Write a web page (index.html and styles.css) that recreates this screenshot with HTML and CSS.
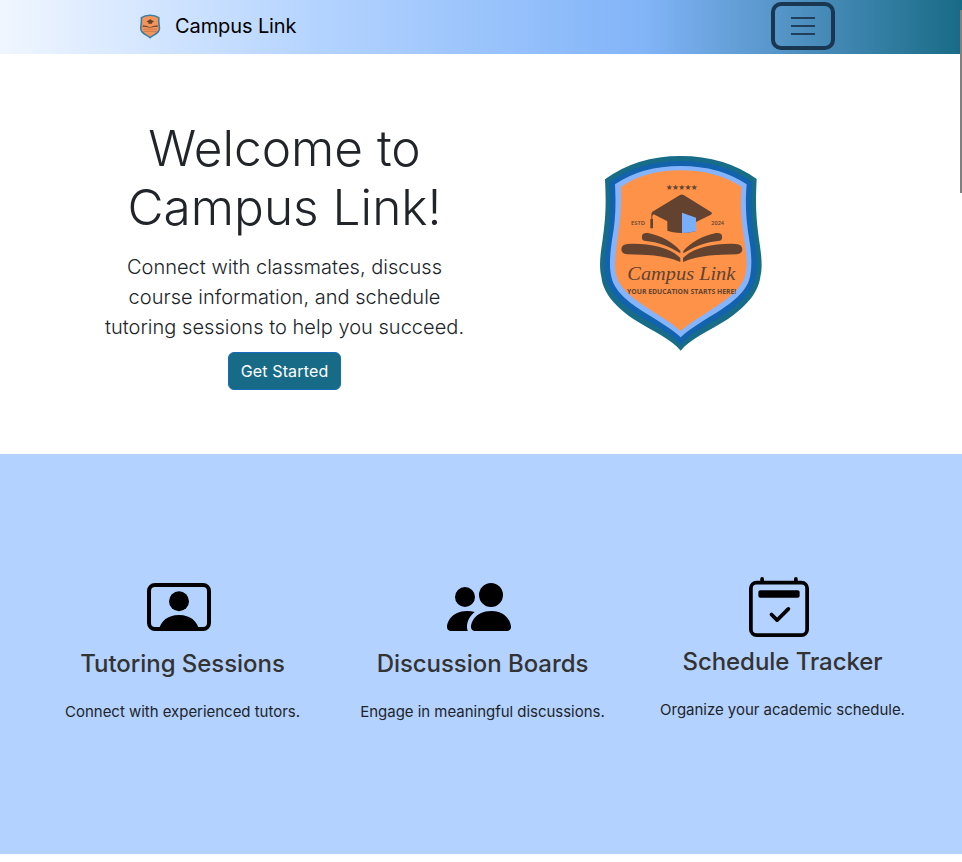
FILE: index.html
```html
<!DOCTYPE html>
<html lang="en">
<head>
<meta charset="utf-8">
<title>Campus Link</title>
<link rel="stylesheet" href="styles.css">
</head>
<body>
<nav class="navbar">
  <a class="brand">
    <svg class="brand-logo" viewBox="0 0 540 645">
      <path fill="#3d7da0" d="M45 103Q140 33 272 33T500 102C496 180 498 220 508 290C516 340 517 370 511 395C504 450 459 490 414 522C354 560 299 583 272 617C245 583 190 560 130 522C85 490 40 450 34 395C28 370 29 340 37 290C47 220 49 180 45 103Z"/>
      <path fill="#f4935a" d="M84 122Q160 70 272 70T462 122C456 180 458 225 470 285C478 335 476 365 474 388C467 430 426 462 388 488C340 518 300 540 272 567C244 540 204 518 156 488C118 462 77 430 70 388C67 365 68 335 75 285C85 225 87 180 84 122Z"/>
      <g fill="#634330">
        <path d="M186 201L275 147L366 203L318 231V258H232V229Z"/>
        <path d="M94 297Q190 290 275 339Q360 290 457 297V328Q350 330 275 351Q190 330 94 328Z"/>
      </g>
      <path stroke="#634330" stroke-width="14" opacity=".45" d="M115 385H435M115 440H435"/>
    </svg>
    <span>Campus Link</span>
  </a>
  <button class="toggler" aria-label="Menu">
    <svg viewBox="0 0 30 30" width="30" height="30"><path stroke="#213f5b" stroke-width="2" d="M3 7h24M3 15h24M3 23h24"/></svg>
  </button>
</nav>
<div class="scroll-thumb"></div>

<header class="hero">
  <div class="hero-copy">
    <h1>Welcome to<br>Campus Link!</h1>
    <p>Connect with classmates, discuss<br>course information, and schedule<br>tutoring sessions to help you succeed.</p>
    <a class="button">Get Started</a>
  </div>
  <svg class="hero-logo" viewBox="0 0 540 645">
    <path fill="#176c88" d="M45 103Q140 33 272 33T500 102C496 180 498 220 508 290C516 340 517 370 511 395C504 450 459 490 414 522C354 560 299 583 272 617C245 583 190 560 130 522C85 490 40 450 34 395C28 370 29 340 37 290C47 220 49 180 45 103Z"/>
    <path fill="#1262ae" d="M59 111Q145 48 272 48T486 111C481 180 484 220 494 290C502 340 503 370 497 392C490 442 446 479 404 507C346 544 299 567 272 599C245 567 198 544 140 507C98 479 54 442 47 392C42 370 43 340 51 290C61 220 62 180 59 111Z"/>
    <path fill="#85b4fc" d="M75 118Q155 63 272 63T470 118C465 180 468 225 478 285C486 335 485 365 481 390C474 436 432 468 392 495C344 526 299 550 272 577C245 550 200 526 152 495C112 468 70 436 63 390C58 365 59 335 66 285C77 225 78 180 75 118Z"/>
    <path fill="#fe9248" d="M93 126Q165 76 272 76T455 126C450 180 453 225 463 285C471 335 471 365 467 385C460 425 420 457 382 482C337 512 299 533 272 558C245 533 207 512 162 482C124 457 84 425 77 385C73 365 75 335 82 285C91 225 95 180 93 126Z"/>
    <g fill="#634330">
      <text class="crest-stars" x="227" y="134" textLength="96">★★★★★</text>
      <path d="M186 201L270 150Q275 147 281 150L362 200Q370 205 361 210L318 231V258Q300 264 275 264Q245 262 232 257V229L191 208L187 212V222H189V250H181V222H184V208Z"/>
      <path d="M156 272Q158 262 174 264C214 272 250 292 271 318V325C240 305 205 291 163 287Q154 285 156 272Z"/>
      <path d="M396 272Q394 262 378 264C338 272 302 292 280 318V325C312 305 347 291 389 287Q398 285 396 272Z"/>
      <path d="M94 313Q95 298 113 297C177 294 240 307 271 339V351C220 329 165 330 111 328Q94 327 94 313Z"/>
      <path d="M457 313Q456 298 438 297C374 294 311 307 279 339V351C330 329 385 330 440 328Q457 327 457 313Z"/>
    </g>
    <path fill="#79aefa" d="M276 203L318 218V258Q300 264 276 264Z"/>
    <g fill="#634330">
      <text class="crest-small" x="123" y="241" textLength="42" lengthAdjust="spacingAndGlyphs">ESTD</text>
      <text class="crest-small" x="364" y="241" textLength="38" lengthAdjust="spacingAndGlyphs">2024</text>
      <text class="crest-name" x="112" y="404" textLength="324" lengthAdjust="spacingAndGlyphs">Campus Link</text>
      <text class="crest-motto" x="111" y="447" textLength="328" lengthAdjust="spacingAndGlyphs">YOUR EDUCATION STARTS HERE!</text>
    </g>
  </svg>
</header>

<main class="features">
  <section class="feature">
    <svg class="icon" viewBox="0 0 16 16"><path d="M8 9.05a2.5 2.5 0 1 0 0-5 2.5 2.5 0 0 0 0 5"/><path d="M2 2a2 2 0 0 0-2 2v8a2 2 0 0 0 2 2h12a2 2 0 0 0 2-2V4a2 2 0 0 0-2-2zm10.798 11c-.453-1.27-1.76-3-4.798-3-3.037 0-4.345 1.73-4.798 3H2a1 1 0 0 1-1-1V4a1 1 0 0 1 1-1h12a1 1 0 0 1 1 1v8a1 1 0 0 1-1 1z"/></svg>
    <h2>Tutoring Sessions</h2>
    <p>Connect with experienced tutors.</p>
  </section>
  <section class="feature">
    <svg class="icon" viewBox="0 0 16 16"><path d="M7 14s-1 0-1-1 1-4 5-4 5 3 5 4-1 1-1 1zm4-6a3 3 0 1 0 0-6 3 3 0 0 0 0 6m-5.784 6A2.24 2.24 0 0 1 5 13c0-1.355.68-2.75 1.936-3.72A6.3 6.3 0 0 0 5 9c-4 0-5 3-5 4s1 1 1 1zM4.5 8a2.5 2.5 0 1 0 0-5 2.5 2.5 0 0 0 0 5"/></svg>
    <h2>Discussion Boards</h2>
    <p>Engage in meaningful discussions.</p>
  </section>
  <section class="feature feature-schedule">
    <svg class="icon" viewBox="0 0 16 16"><path d="M10.854 8.146a.5.5 0 0 1 0 .708l-3 3a.5.5 0 0 1-.708 0l-1.5-1.5a.5.5 0 1 1 .708-.708L7.5 10.793l2.646-2.647a.5.5 0 0 1 .708 0"/><path d="M3.5 0a.5.5 0 0 1 .5.5V1h8V.5a.5.5 0 0 1 1 0V1h1a2 2 0 0 1 2 2v11a2 2 0 0 1-2 2H2a2 2 0 0 1-2-2V3a2 2 0 0 1 2-2h1V.5a.5.5 0 0 1 .5-.5M2 2a1 1 0 0 0-1 1v11a1 1 0 0 0 1 1h12a1 1 0 0 0 1-1V3a1 1 0 0 0-1-1z"/><path d="M2.5 4a.5.5 0 0 1 .5-.5h10a.5.5 0 0 1 .5.5v1a.5.5 0 0 1-.5.5H3a.5.5 0 0 1-.5-.5z"/></svg>
    <h2>Schedule Tracker</h2>
    <p>Organize your academic schedule.</p>
  </section>
</main>
</body>
</html>
```
FILE: styles.css
```css
* { box-sizing: border-box; }
body {
  margin: 0;
  height: 862px;
  overflow: hidden;
  background: #fff;
  color: #212529;
  font-family: Inter, "Liberation Sans", sans-serif;
}
h1, h2, p { margin: 0; white-space: nowrap; }
.navbar {
  display: flex;
  align-items: center;
  justify-content: space-between;
  height: 54px;
  padding: 0 127px 2px 138px;
  background: linear-gradient(to right, #f0f6ff, #b3d3ff 33.3%, #82b4f8 67%, #186b86);
}
.brand {
  display: flex;
  align-items: center;
  gap: 13px;
  color: #000;
  font-size: 20px;
  letter-spacing: -0.1px;
}
.brand-logo { width: 24px; height: 27px; }
.toggler {
  display: flex;
  align-items: center;
  justify-content: center;
  width: 64px;
  height: 48px;
  padding: 0;
  background: none;
  border: 4px solid #1a3751;
  border-radius: 10px;
}
.scroll-thumb {
  position: absolute;
  top: 10px;
  right: 0;
  width: 2px;
  height: 183px;
  background: #808080;
}
.hero {
  display: flex;
  height: 400px;
  padding: 65px 0 0 84px;
}
.hero-copy { width: 401px; text-align: center; }
.hero h1 {
  font-size: 49.57px;
  font-weight: 300;
  line-height: 59px;
}
.hero p {
  margin: 15px 0 10px;
  font-size: 20px;
  font-weight: 300;
  line-height: 30px;
  letter-spacing: 0.03px;
}
.button {
  display: inline-block;
  height: 38px;
  padding: 0 12px;
  border: 1px solid #176bbd;
  border-radius: 6px;
  background: #186b86;
  color: #fff;
  font-size: 16px;
  line-height: 36px;
  letter-spacing: 0.15px;
}
.hero-logo { width: 180px; height: 215px; margin: 26px 0 0 105px; }
.crest-stars { font: 23px "DejaVu Sans", sans-serif; }
.crest-small { font: 600 16px "Open Sans", sans-serif; }
.crest-name { font: italic 58px "Liberation Serif", serif; }
.crest-motto { font: bold 20px "Open Sans", sans-serif; }
.features {
  display: grid;
  grid-template-columns: repeat(3, 300px);
  height: 400px;
  padding: 121px 0 0 32.5px;
  background: #b3d2ff;
}
.feature { display: flex; flex-direction: column; align-items: center; }
.icon { width: 64px; height: 64px; margin-right: 7px; }
.feature h2 {
  margin-top: 10px;
  color: #333;
  font-size: 24px;
  font-weight: 500;
  line-height: 29px;
  letter-spacing: -0.05px;
}
.feature p {
  margin-top: 22px;
  font-size: 15px;
  line-height: 24px;
  letter-spacing: -0.03px;
}
.feature-schedule { padding-top: 2px; }
.feature-schedule .icon { width: 60px; height: 60px; }
```
